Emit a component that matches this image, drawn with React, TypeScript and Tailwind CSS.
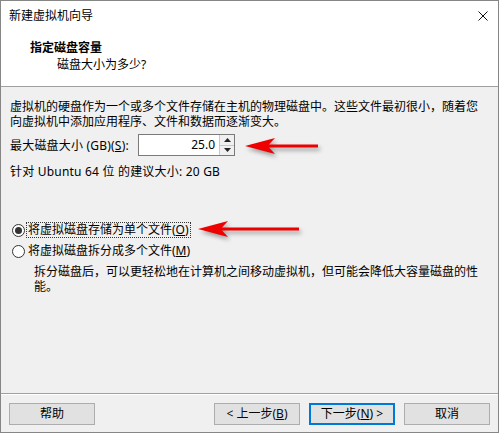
import React from "react";

const font = "font-['Segoe_UI','Noto_Sans','Noto_Sans_CJK_SC',sans-serif]";

const RedArrow = ({ width }: { width: number }) => (
  <svg
    width={width}
    height={22}
    viewBox={`0 0 ${width} 22`}
    className="drop-shadow-[2px_3px_2px_rgba(0,0,0,0.35)] overflow-visible"
  >
    <path
      d={`M1 11 L31 3 L25 9.5 L${width - 2} 9.5 L${width - 2} 12.5 L25 12.5 L31 19 Z`}
      fill="#ee0000"
    />
  </svg>
);

const Radio = ({ checked }: { checked?: boolean }) => (
  <span className="w-[13px] h-[13px] rounded-full border border-[#333] bg-white flex items-center justify-center shrink-0">
    {checked && <span className="w-[7px] h-[7px] rounded-full bg-[#333]" />}
  </span>
);

const Button = ({
  children,
  primary,
}: {
  children: React.ReactNode;
  primary?: boolean;
}) => (
  <div
    className={`w-[86px] h-[22px] flex items-center justify-center bg-[#e1e1e1] text-[12px] text-black ${
      primary ? "border-2 border-[#0078d7]" : "border border-[#adadad]"
    }`}
  >
    {children}
  </div>
);

export default function App() {
  return (
    <div
      className={`w-[499px] h-[433px] border border-[#868686] bg-[#f0f0f0] flex flex-col text-[12px] text-black ${font}`}
    >
      <div className="bg-white h-[86px] border-b border-[#a0a0a0] flex flex-col">
        <div className="h-[29px] flex items-center justify-between pl-[8px] pr-[10px]">
          <span className="leading-[15px]">新建虚拟机向导</span>
          <svg width="10" height="10" viewBox="0 0 10 10">
            <path d="M0.5 0.5 L9.5 9.5 M9.5 0.5 L0.5 9.5" stroke="#111" strokeWidth="1" />
          </svg>
        </div>
        <div className="pl-[29px] mt-[10px] font-bold leading-[15px]">指定磁盘容量</div>
        <div className="pl-[56px] mt-[2px] leading-[15px]">磁盘大小为多少?</div>
      </div>

      <div className="flex-1 flex flex-col pl-[9px]">
        <div className="mt-[12px] leading-[15px]">
          <div>虚拟机的硬盘作为一个或多个文件存储在主机的物理磁盘中。这些文件最初很小，随着您</div>
          <div>向虚拟机中添加应用程序、文件和数据而逐渐变大。</div>
        </div>

        <div className="mt-[5px] flex items-center h-[22px]">
          <span className="w-[128px] leading-[15px] tracking-[0.2px]">
            最大磁盘大小 (GB)(<span className="underline">S</span>):
          </span>
          <div className="flex h-[22px] border border-[#7a7a7a] bg-white">
            <div className="w-[80px] flex items-center justify-end pr-[4px]">25.0</div>
            <div className="w-[15px] flex flex-col border-l border-[#c8c8c8] bg-[#f0f0f0]">
              <div className="flex-1 flex items-center justify-center border-b border-[#c8c8c8]">
                <svg width="7" height="4" viewBox="0 0 7 4">
                  <path d="M0 4 L3.5 0 L7 4 Z" fill="#222" />
                </svg>
              </div>
              <div className="flex-1 flex items-center justify-center">
                <svg width="7" height="4" viewBox="0 0 7 4">
                  <path d="M0 0 L3.5 4 L7 0 Z" fill="#222" />
                </svg>
              </div>
            </div>
          </div>
          <div className="ml-[9px] mt-[1px]">
            <RedArrow width={76} />
          </div>
        </div>

        <div className="mt-[8px] leading-[15px] tracking-[0.2px]">针对 Ubuntu 64 位 的建议大小: 20 GB</div>

        <div className="mt-[42px] flex items-center h-[18px] pl-[2px]">
          <Radio checked />
          <span className="ml-[1px] px-[1px] border border-dotted border-[#333] leading-[14px]">
            将虚拟磁盘存储为单个文件(<span className="underline">O</span>)
          </span>
          <div className="ml-[6px] -mt-[2px]">
            <RedArrow width={104} />
          </div>
        </div>

        <div className="mt-[3px] flex items-center h-[18px] pl-[2px]">
          <Radio />
          <span className="ml-[3px] leading-[14px]">
            将虚拟磁盘拆分成多个文件(<span className="underline">M</span>)
          </span>
        </div>

        <div className="mt-[4px] pl-[24px] leading-[15px]">
          <div>拆分磁盘后，可以更轻松地在计算机之间移动虚拟机，但可能会降低大容量磁盘的性</div>
          <div>能。</div>
        </div>
      </div>

      <div className="border-t border-[#a0a0a0]">
        <div className="border-t border-white h-[38px] flex items-center justify-between px-[8px]">
          <Button>帮助</Button>
          <div className="flex gap-[9px]">
            <Button>
              <span className="text-[#0a0a0a]">&lt; 上一步(<span className="underline">B</span>)</span>
            </Button>
            <Button primary>
              下一步(<span className="underline">N</span>) &gt;
            </Button>
            <Button>取消</Button>
          </div>
        </div>
      </div>
    </div>
  );
}
